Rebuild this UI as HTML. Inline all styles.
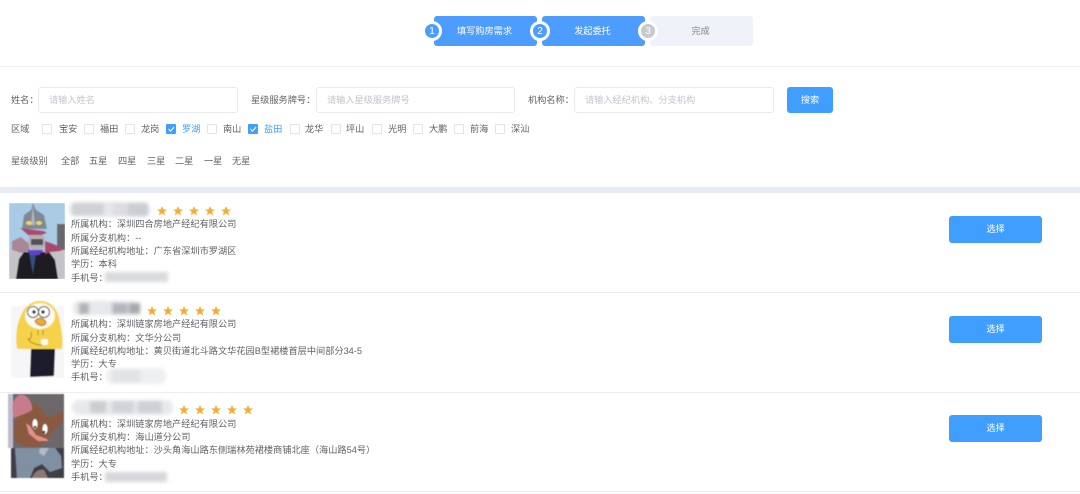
<!DOCTYPE html>
<html lang="zh">
<head>
<meta charset="utf-8">
<title>发起委托</title>
<style>
*{box-sizing:border-box}
html,body{margin:0;padding:0;background:#fff}
body{width:1080px;height:494px;position:relative;overflow:hidden;font-family:"Liberation Sans","Noto Sans CJK SC",sans-serif;font-size:9.2px;color:#606266}
#w{position:absolute;left:0;top:0;width:1080px;height:494px;filter:blur(.35px)}
.t{position:absolute;white-space:nowrap;line-height:12px;height:12px}
.b{position:absolute}
.input{position:absolute;top:87px;height:26px;border:1px solid #e8eaf0;border-radius:3px;background:#fff;color:#c0c4cc;line-height:25px;padding-left:10px}
.cb{position:absolute;top:124px;width:10px;height:10px;border:1px solid #e2e4ea;border-radius:1px;background:#fff}
.cb.on{background:#409eff;border-color:#409eff}
.step{position:absolute;top:16px;width:103px;height:30px;border-radius:3px;text-align:center;line-height:31px;background:#4c9dff;color:#fff;padding-right:2px}
.num{position:absolute;top:21px;width:20px;height:20px;border-radius:50%;border:3px solid #fff;background:#4c9dff;color:#fff;text-align:center;line-height:15px;font-size:10px}
.btn{position:absolute;background:#409eff;color:#fff;border-radius:3px;text-align:center}
.line{position:absolute;left:0;width:1080px;height:1px;background:#eceef2}
.txt{color:#5f6166}
svg.layer{position:absolute;left:0;top:0}
</style>
</head>
<body>
<div id="w">

<div class="step" style="left:434px">填写购房需求</div>
<div class="step" style="left:542px">发起委托</div>
<div class="step" style="left:650px;background:#eff2f8;color:#85878c">完成</div>
<div class="num" style="left:422px">1</div>
<div class="num" style="left:530px">2</div>
<div class="num" style="left:638px;background:#c8c9cc">3</div>
<div class="line" style="top:66px"></div>

<div class="t" style="left:11px;top:94px">姓名：</div>
<div class="input" style="left:38px;width:200px">请输入姓名</div>
<div class="t" style="left:251px;top:94px">星级服务牌号：</div>
<div class="input" style="left:316px;width:199px">请输入星级服务牌号</div>
<div class="t" style="left:528px;top:94px">机构名称：</div>
<div class="input" style="left:574px;width:200px">请输入经纪机构、分支机构</div>
<div class="btn" style="left:787px;top:87px;width:46px;height:26px;line-height:27px">搜索</div>

<div class="t" style="left:11px;top:123px">区域</div>
<div class="cb" style="left:42px"></div><div class="t" style="left:59px;top:123px">宝安</div>
<div class="cb" style="left:84px"></div><div class="t" style="left:100px;top:123px">福田</div>
<div class="cb" style="left:125px"></div><div class="t" style="left:141px;top:123px">龙岗</div>
<div class="cb on" style="left:166px"></div><div class="t" style="left:182px;top:123px;color:#409eff">罗湖</div>
<div class="cb" style="left:207px"></div><div class="t" style="left:223px;top:123px">南山</div>
<div class="cb on" style="left:248px"></div><div class="t" style="left:264px;top:123px;color:#409eff">盐田</div>
<div class="cb" style="left:290px"></div><div class="t" style="left:305px;top:123px">龙华</div>
<div class="cb" style="left:331px"></div><div class="t" style="left:346px;top:123px">坪山</div>
<div class="cb" style="left:372px"></div><div class="t" style="left:388px;top:123px">光明</div>
<div class="cb" style="left:413px"></div><div class="t" style="left:429px;top:123px">大鹏</div>
<div class="cb" style="left:454px"></div><div class="t" style="left:470px;top:123px">前海</div>
<div class="cb" style="left:495px"></div><div class="t" style="left:511px;top:123px">深汕</div>

<div class="t" style="left:11px;top:155px">星级级别</div>
<div class="t" style="left:61px;top:155px">全部</div>
<div class="t" style="left:89px;top:155px">五星</div>
<div class="t" style="left:118px;top:155px">四星</div>
<div class="t" style="left:147px;top:155px">三星</div>
<div class="t" style="left:175px;top:155px">二星</div>
<div class="t" style="left:204px;top:155px">一星</div>
<div class="t" style="left:232px;top:155px">无星</div>

<div class="b" style="left:0;top:187px;width:1080px;height:6px;background:#e9ecf4"></div>
<div class="line" style="top:292px"></div>
<div class="line" style="top:392px"></div>
<div class="line" style="top:491px"></div>

<div class="t txt" style="left:71px;top:218px">所属机构：深圳四合房地产经纪有限公司</div>
<div class="t txt" style="left:71px;top:232px">所属分支机构：--</div>
<div class="t txt" style="left:71px;top:245px">所属经纪机构地址：广东省深圳市罗湖区</div>
<div class="t txt" style="left:71px;top:258px">学历：本科</div>
<div class="t txt" style="left:71px;top:272px">手机号：</div>

<div class="t txt" style="left:71px;top:318px">所属机构：深圳链家房地产经纪有限公司</div>
<div class="t txt" style="left:71px;top:332px">所属分支机构：文华分公司</div>
<div class="t txt" style="left:71px;top:345px">所属经纪机构地址：黄贝街道北斗路文华花园B型裙楼首层中间部分34-5</div>
<div class="t txt" style="left:71px;top:358px">学历：大专</div>
<div class="t txt" style="left:71px;top:371px">手机号：</div>

<div class="t txt" style="left:71px;top:418px">所属机构：深圳链家房地产经纪有限公司</div>
<div class="t txt" style="left:71px;top:431px">所属分支机构：海山道分公司</div>
<div class="t txt" style="left:71px;top:444px">所属经纪机构地址：沙头角海山路东侧瑞林苑裙楼商铺北座（海山路54号）</div>
<div class="t txt" style="left:71px;top:458px">学历：大专</div>
<div class="t txt" style="left:71px;top:471px">手机号：</div>

<div class="btn" style="left:949px;top:216px;width:93px;height:27px;line-height:27px">选择</div>
<div class="btn" style="left:949px;top:316px;width:93px;height:27px;line-height:27px">选择</div>
<div class="btn" style="left:949px;top:415px;width:93px;height:27px;line-height:27px">选择</div>

<svg class="layer" width="1080" height="494" viewBox="0 0 1080 494">
<defs>
<filter id="s" x="-20%" y="-20%" width="140%" height="140%"><feGaussianBlur stdDeviation="0.6"/></filter>
<filter id="m" x="-20%" y="-40%" width="140%" height="180%"><feGaussianBlur stdDeviation="1.8"/></filter>
<polygon id="star" points="0,-5 1.4,-1.6 5,-1.5 2.2,0.8 3.1,4.4 0,2.4 -3.1,4.4 -2.2,0.8 -5,-1.5 -1.4,-1.6" fill="#f8ad32"/>
<clipPath id="c1"><rect x="9" y="203" width="56" height="76"/></clipPath>
<clipPath id="c3"><rect x="8" y="394" width="56" height="54"/></clipPath>
<clipPath id="c3b"><rect x="11" y="448" width="53" height="30"/></clipPath>
</defs>

<!-- checks -->
<path d="M168.5 129l2 2.2 3.6-4.2M250.5 129l2 2.2 3.6-4.2" fill="none" stroke="#fff" stroke-width="1"/>

<!-- blurred names -->
<g filter="url(#m)">
<rect x="69" y="202" width="81" height="15" rx="7" fill="#e6e7ea"/>
<rect x="72" y="203" width="32" height="12" fill="#cfd1d6"/>
<rect x="113" y="203" width="22" height="13" fill="#dcdde1"/>
<rect x="128" y="203" width="20" height="13" fill="#cbcdd2"/>
<rect x="73" y="301" width="68" height="14" rx="6" fill="#e6e8ec"/>
<rect x="79" y="303" width="10" height="11" fill="#aeb1b6"/>
<rect x="112" y="303" width="16" height="11" fill="#b3b7bd"/>
<rect x="129" y="303" width="11" height="11" fill="#a5a8ae"/>
<rect x="72" y="400" width="101" height="15" rx="7" fill="#e8e9ec"/>
<rect x="90" y="401" width="16" height="12" fill="#cccdd2"/>
<rect x="112" y="401" width="22" height="12" fill="#d2d3d8"/>
<rect x="138" y="401" width="24" height="12" fill="#cdd0d5"/>
</g>

<!-- blurred phones -->
<g filter="url(#m)">
<rect x="105" y="272" width="63" height="10" fill="#d9dade"/>
<rect x="106" y="368" width="60" height="16" rx="7" fill="#eeeff1"/>
<rect x="112" y="370" width="28" height="12" fill="#e2e3e6"/>
<rect x="105" y="472" width="62" height="10" fill="#d6d7db"/>
</g>

<!-- stars -->
<g>
<use href="#star" x="162" y="211"/><use href="#star" x="178" y="211"/><use href="#star" x="194" y="211"/><use href="#star" x="210" y="211"/><use href="#star" x="226" y="211"/>
<use href="#star" x="152" y="311"/><use href="#star" x="168" y="311"/><use href="#star" x="184" y="311"/><use href="#star" x="200" y="311"/><use href="#star" x="216" y="311"/>
<use href="#star" x="184" y="410"/><use href="#star" x="200" y="410"/><use href="#star" x="216" y="410"/><use href="#star" x="232" y="410"/><use href="#star" x="248" y="410"/>
</g>

<!-- avatar 1 -->
<g clip-path="url(#c1)" filter="url(#s)">
<rect x="9" y="203" width="56" height="76" fill="#a9cbe6"/>
<rect x="57" y="224" width="8" height="30" fill="#68686c"/>
<rect x="9" y="250" width="56" height="29" fill="#c4c4c8"/>
<path d="M16 279l3-20 5-7h25l6 8 3 19z" fill="#1b1c23"/>
<path d="M29 253h7l-3 21z" fill="#36507c"/>
<path d="M33 203l3 7 8 5 3 14H22l2-14 7-5z" fill="#808892"/>
<path d="M33 205l2 20h-4z" fill="#aeb6c4"/>
<ellipse cx="29" cy="223" rx="3" ry="2" fill="#f1d264"/>
<ellipse cx="39" cy="223" rx="3" ry="2" fill="#f1d264"/>
<path d="M20 228l24 3 3 2-9 3-10-1z" fill="#ad4a70"/>
<path d="M29 235h15l1 11-4 4H32l-4-5z" fill="#b6b0b2"/>
<path d="M31 239h12v6H31z" fill="#55505a"/>
<path d="M12 241l9-4 7 6 2 7-8 3-10-3z" fill="#a98794"/>
<path d="M45 241l6 2 12 5-2 3-10 1-6 2z" fill="#a8496e"/>
<path d="M27 250h17l-5 5h-8z" fill="#5e3fd0"/>
</g>

<!-- avatar 2 -->
<g filter="url(#s)">
<rect x="11" y="306" width="53" height="72" fill="#f6f6f8"/>
<path d="M31 349h24l-1 27-24 1z" fill="#1d1f29"/>
<path d="M17 349C15 335 17 325 20 318C24 306 32 301 40 301C50 301 57 308 59 318C62 330 63 340 62 349Z" fill="#f5d249"/>
<ellipse cx="40" cy="316" rx="15" ry="13" fill="#fbfaf0"/>
<circle cx="33" cy="312" r="5.5" fill="#fff" stroke="#4a4a44" stroke-width="1"/>
<circle cx="44" cy="312" r="5.5" fill="#fff" stroke="#4a4a44" stroke-width="1"/>
<circle cx="34" cy="312" r="1.7" fill="#333"/><circle cx="43" cy="312" r="1.7" fill="#333"/>
<path d="M35 321c3-4 8-4 11 1 0 5-9 5-11-1z" fill="#f0a735" stroke="#7a5a20" stroke-width=".7"/>
<path d="M31 332c1 3 0 6-1 7h-2c3 4 8 6 14 6M38 330v5M43 330v5" fill="none" stroke="#8d7a2e" stroke-width=".8"/>
<rect x="41" y="339" width="7" height="6" rx="2" fill="#fbfbf4"/>
</g>

<!-- avatar 3 -->
<g filter="url(#s)">
<g clip-path="url(#c3b)">
<rect x="11" y="448" width="53" height="30" fill="#3f3e47"/>
<path d="M15 448h40l6 8 1 12-12 4-8-8-8 4-4 10H17z" fill="#7f90a3"/>
<path d="M40 448h9l-5 8-5-3z" fill="#b0bac5"/>
<path d="M32 478c2-6 7-9 12-8l4 8z" fill="#8a7a72"/>
</g>
<g clip-path="url(#c3)">
<rect x="8" y="394" width="56" height="54" fill="#6c676b"/>
<rect x="8" y="394" width="5" height="54" fill="#c0bccd"/>
<path d="M30 403c8 0 14 7 18 15l15-7c2 9-3 17-11 20-2 8-7 14-16 16-8 1-20-1-22-10-1-8 1-18 5-24 4-6 6-10 11-10z" fill="#8a5a40"/>
<path d="M14 418c-3-8-2-19 5-23 8-2 14 8 13 15-4 3-11 5-18 8z" fill="#c77c8b"/>
<ellipse cx="35" cy="424" rx="2.5" ry="5" fill="#fff"/><ellipse cx="45" cy="429" rx="2.5" ry="5" fill="#fff"/>
<circle cx="35" cy="427" r="1.3" fill="#222"/><circle cx="44" cy="432" r="1.3" fill="#222"/>
<path d="M26 423l4 3 6 9 11 4 1 2-10 0-9-7z" fill="#e29089"/>
</g>
</g>
</svg>

</div>
</body>
</html>
